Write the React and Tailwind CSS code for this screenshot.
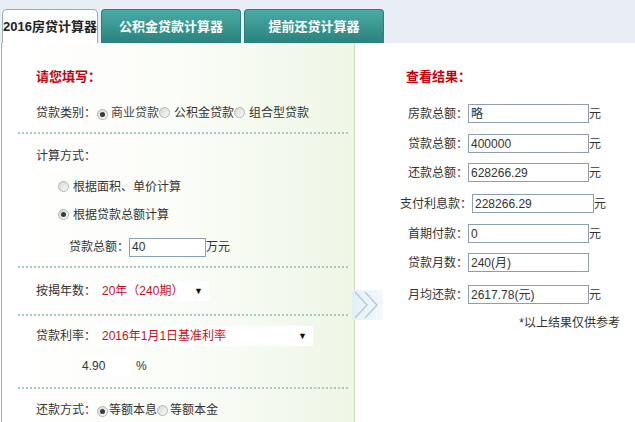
import React from "react";

const font = { fontFamily: '"Liberation Sans", Arial, "Noto Sans CJK SC", sans-serif' };

const Radio = ({ checked }) => (
    <span className="inline-flex items-center justify-center w-[11px] h-[11px] rounded-full border border-[#b4b4b4] bg-gradient-to-br from-[#d6d6d6] to-[#fbfbfb] shrink-0">
        {checked && <span className="w-[5px] h-[5px] rounded-full bg-[#3a3a3a]" />}
    </span>
);

const Dotted = () => <div className="mx-[16px] w-[330px] h-0 border-t-2 border-dotted border-[#a6cac8]" />;

const ResultRow = ({ label, value, unit = "元", pl = "pl-[53px]", mt, wide }) => (
    <div className={`flex items-center h-[19px] ${pl} ${mt}`}>
        <span>{label}</span>
        <div className={`${wide ? "w-[122px]" : "w-[121px]"} h-[19px] border border-[#8a9fb5] bg-white flex items-center pl-[2px] text-[#333]`}>
            {value}
        </div>
        {unit && <span>{unit}</span>}
    </div>
);

export default function App() {
    return (
        <div className="w-[635px] h-[422px] overflow-hidden bg-white text-[12px] text-[#333]" style={font}>
            {/* tabs */}
            <div className="h-[43px] bg-[#e8eef3] flex items-end pl-[2px] gap-[3px]">
                <div className="w-[96px] h-[34px] bg-white border border-b-0 border-[#9aaab5] rounded-t-[5px] flex items-center justify-center font-bold text-[13px] text-[#222]">
                    2016房贷计算器
                </div>
                <div className="w-[140px] h-[34px] rounded-t-[4px] bg-gradient-to-b from-[#4aaba4] to-[#2a827d] border border-[#2d7e7a] border-b-0 flex items-center justify-center font-bold text-[13px] text-white">
                    公积金贷款计算器
                </div>
                <div className="w-[140px] h-[34px] rounded-t-[4px] bg-gradient-to-b from-[#4aaba4] to-[#2a827d] border border-[#2d7e7a] border-b-0 flex items-center justify-center font-bold text-[13px] text-white">
                    提前还贷计算器
                </div>
            </div>

            <div className="flex h-[379px] relative">
                {/* left form */}
                <div className="w-[354px] shrink-0 ml-[1px] border-l border-[#8fb0c4] border-r border-r-[#c6e0b2] bg-gradient-to-r from-white via-[#fbfdf8] to-[#eef6e6] flex flex-col">
                    <div className="mt-[20px] h-[28px] flex items-center pl-[34px] font-bold text-[13px] text-[#c4000b]">请您填写：</div>
                    <div className="mt-[10px] h-[24px] flex items-center pl-[34px]">
                        <span>贷款类别：</span>
                        <span className="ml-[1px]"><Radio checked /></span>
                        <span className="ml-[3px] text-[#444]">商业贷款</span>
                        <Radio />
                        <span className="ml-[4px]">公积金贷款</span>
                        <Radio />
                        <span className="ml-[4px]">组合型贷款</span>
                    </div>
                    <div className="mt-[7px]"><Dotted /></div>
                    <div className="mt-[10px] h-[24px] flex items-center pl-[34px]">计算方式：</div>
                    <div className="mt-[7px] h-[24px] flex items-center pl-[56px] gap-[4px]">
                        <Radio />
                        <span>根据面积、单价计算</span>
                    </div>
                    <div className="mt-[4px] h-[24px] flex items-center pl-[56px] gap-[4px]">
                        <Radio checked />
                        <span>根据贷款总额计算</span>
                    </div>
                    <div className="mt-[9px] h-[24px] flex items-center pl-[67px]">
                        <span>贷款总额：</span>
                        <div className="w-[77px] h-[19px] border border-[#8a9fb5] bg-white flex items-center pl-[2px]">40</div>
                        <span>万元</span>
                    </div>
                    <div className="mt-[7px]"><Dotted /></div>
                    <div className="mt-[11px] h-[24px] flex items-center pl-[34px]">
                        <span>按揭年数：</span>
                        <div className="ml-[3px] w-[110px] h-[20px] bg-white flex items-center pl-[3px] text-[#c4101a]">
                            <span className="flex-1">20年（240期）</span>
                            <span className="text-[#111] text-[9px] mr-[6px]">▼</span>
                        </div>
                    </div>
                    <div className="mt-[11px]"><Dotted /></div>
                    <div className="mt-[8px] h-[24px] flex items-center pl-[34px]">
                        <span>贷款利率：</span>
                        <div className="ml-[3px] w-[214px] h-[20px] bg-white flex items-center pl-[3px] text-[#c4101a]">
                            <span className="flex-1">2016年1月1日基准利率</span>
                            <span className="text-[#111] text-[9px] mr-[6px]">▼</span>
                        </div>
                    </div>
                    <div className="mt-[6px] h-[24px] flex items-center pl-[78px]">
                        <div className="w-[50px] h-[19px] bg-white flex items-center pl-[2px]">4.90</div>
                        <span className="ml-[6px]">%</span>
                    </div>
                    <div className="mt-[9px]"><Dotted /></div>
                    <div className="mt-[9px] h-[24px] flex items-center pl-[34px]">
                        <span>还款方式：</span>
                        <span className="ml-[1px]"><Radio checked /></span>
                        <span className="ml-[1px]">等额本息</span>
                        <Radio />
                        <span className="ml-[2px]">等额本金</span>
                    </div>
                </div>

                {/* arrow overlay */}
                <div className="absolute left-[352px] top-[247px] w-[31px] h-[30px] bg-gradient-to-r from-[#e4eff6] to-[#f2f8fb]">
                    <svg width="31" height="30" viewBox="0 0 31 30">
                        <path d="M3 2 L15 15 L3 28" fill="none" stroke="#b8ccd8" strokeWidth="1.5" />
                        <path d="M13 2 L25 15 L13 28" fill="none" stroke="#b8ccd8" strokeWidth="1.5" />
                    </svg>
                </div>

                {/* right results */}
                <div className="flex-1 flex flex-col">
                    <div className="mt-[20px] h-[28px] flex items-center pl-[51px] font-bold text-[13px] text-[#c4000b]">查看结果：</div>
                    <ResultRow label="房款总额：" value="略" mt="mt-[13px]" />
                    <ResultRow label="贷款总额：" value="400000" mt="mt-[11px]" />
                    <ResultRow label="还款总额：" value="628266.29" mt="mt-[10px]" />
                    <ResultRow label="支付利息款：" value="228266.29" pl="pl-[45px]" mt="mt-[12px]" wide />
                    <ResultRow label="首期付款：" value="0" mt="mt-[11px]" />
                    <ResultRow label="贷款月数：" value="240(月)" unit="" mt="mt-[10px]" />
                    <ResultRow label="月均还款：" value="2617.78(元)" mt="mt-[13px]" />
                    <div className="mt-[10px] h-[18px] flex items-center justify-end pr-[15px]">*以上结果仅供参考</div>
                </div>
            </div>
        </div>
    );
}
